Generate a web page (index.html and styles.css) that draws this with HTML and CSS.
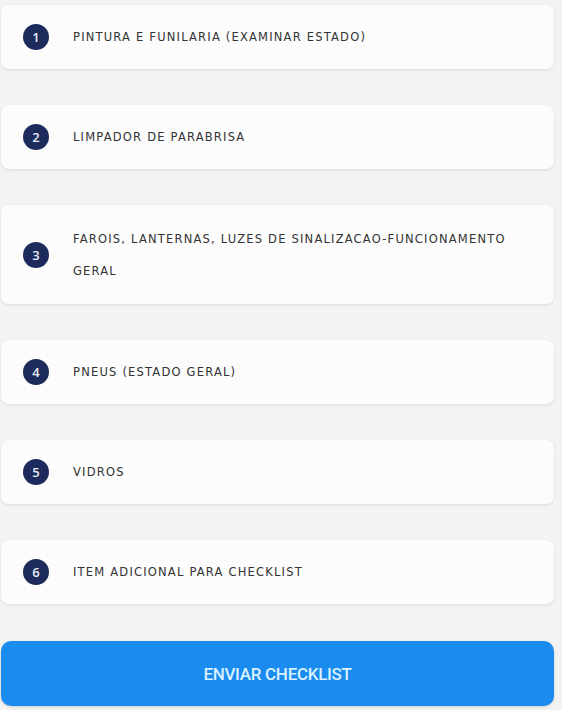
FILE: index.html
```html
<!DOCTYPE html>
<html lang="pt">
<head>
<meta charset="utf-8">
<link rel="stylesheet" href="styles.css">
</head>
<body>
<main class="page">
  <ul class="list">
    <li class="card"><span class="num">1</span><span class="label">PINTURA E FUNILARIA (EXAMINAR ESTADO)</span></li>
    <li class="card"><span class="num">2</span><span class="label">LIMPADOR DE PARABRISA</span></li>
    <li class="card card-tall"><span class="num">3</span><span class="label">FAROIS, LANTERNAS, LUZES DE SINALIZACAO-FUNCIONAMENTO GERAL</span></li>
    <li class="card"><span class="num">4</span><span class="label">PNEUS (ESTADO GERAL)</span></li>
    <li class="card"><span class="num">5</span><span class="label">VIDROS</span></li>
    <li class="card"><span class="num">6</span><span class="label">ITEM ADICIONAL PARA CHECKLIST</span></li>
  </ul>
  <button class="submit" type="button">ENVIAR CHECKLIST</button>
</main>
</body>
</html>
```
FILE: styles.css
```css
html, body {
  margin: 0;
  padding: 0;
  background: #f3f3f3;
}
body {
  width: 562px;
  height: 710px;
  overflow: hidden;
  font-family: "Open Sans", "Noto Sans", sans-serif;
}
.page {
  display: flex;
  flex-direction: column;
  padding: 5px 8px 0 1px;
}
.list {
  list-style: none;
  margin: 0;
  padding: 0;
  display: flex;
  flex-direction: column;
  gap: 36px;
}
.card {
  display: flex;
  align-items: center;
  height: 64px;
  background: #fcfcfc;
  border-radius: 8px;
  box-shadow: 0 1px 3px rgba(0,0,0,0.10);
  padding: 0 20px 0 22px;
  box-sizing: border-box;
}
.card-tall {
  height: 99px;
}
.num {
  flex: 0 0 26px;
  width: 26px;
  height: 26px;
  border-radius: 50%;
  background: #1c2b5c;
  color: #e8ecf5;
  font-size: 13px;
  font-weight: 600;
  display: flex;
  align-items: center;
  justify-content: center;
  margin-right: 24px;
}
.label {
  font-family: "DejaVu Sans", sans-serif;
  font-size: 11.5px;
  letter-spacing: 1.2px;
  color: #333;
  line-height: 32px;
  padding-right: 10px;
}
.submit {
  margin-top: 37px;
  height: 65px;
  border: none;
  border-radius: 10px;
  background: #1a8cf0;
  color: #d9f1ff;
  font-family: Roboto, sans-serif;
  font-weight: 500;
  font-size: 17px;
  letter-spacing: -0.3px;
  box-shadow: 0 1px 3px rgba(0,0,0,0.15);
}
```
